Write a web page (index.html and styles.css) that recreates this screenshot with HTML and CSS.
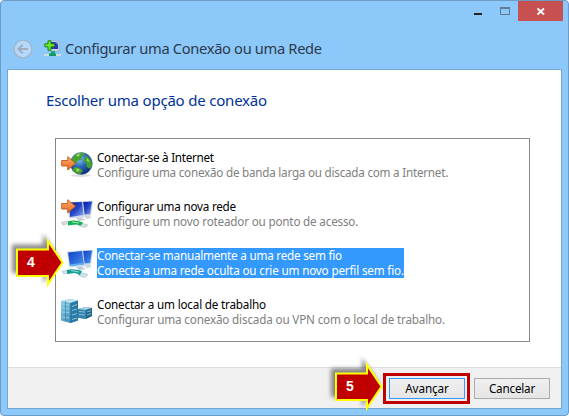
FILE: index.html
```html
<!DOCTYPE html>
<html lang="pt-BR">
<head>
<meta charset="utf-8">
<title>Configurar uma Conexão ou uma Rede</title>
<link rel="stylesheet" href="styles.css">
</head>
<body>
<svg class="defs" width="0" height="0">
  <defs>
    <linearGradient id="screen" x1="0" y1="0" x2="1" y2="1"><stop offset="0" stop-color="#1440bc"/><stop offset=".5" stop-color="#2a68dc"/><stop offset="1" stop-color="#4d9cf2"/></linearGradient>
    <linearGradient id="screenDark" x1="0" y1="0" x2="1" y2="1"><stop offset="0" stop-color="#0a1496"/><stop offset=".5" stop-color="#2446c8"/><stop offset="1" stop-color="#8eaef0"/></linearGradient>
    <linearGradient id="orange" x1="0" y1="0" x2="0" y2="1"><stop offset="0" stop-color="#ffb070"/><stop offset="1" stop-color="#e8621c"/></linearGradient>
    <radialGradient id="sea" cx=".4" cy=".3" r=".7"><stop offset="0" stop-color="#8cc4f0"/><stop offset=".5" stop-color="#2a68b8"/><stop offset="1" stop-color="#0c2c78"/></radialGradient>
    <linearGradient id="steel" x1="0" y1="0" x2="1" y2="1"><stop offset="0" stop-color="#8fd0ea"/><stop offset="1" stop-color="#2b7ca8"/></linearGradient>
    <symbol id="pcs" viewBox="0 0 32 32">
      <path d="M21 3.500 32 3 30 17.500 22 18z" fill="#c4d4e6"/>
      <path d="M22 4 31 3.500 29 16 22 16.500z" fill="url(#screen)"/>
      <path d="M6 4.500 22 3 24 19.500 8 20.500z" fill="#d3deea"/>
      <path d="M7 5.500 21 4 23 17.500 9 19z" fill="url(#screen)"/>
      <path d="M8.500 17.500 22.500 16 23 17.500 9 19z" fill="#58b4f4"/>
      <path d="M15 20 20 19.500 25 22 18 23z" fill="#b9c9d5"/>
      <path d="M24 18 29 17.500 30 20 25 21z" fill="#c9d6df"/>
    </symbol>
    <symbol id="pcsDark" viewBox="0 0 32 32">
      <path d="M21 3.500 32 3 30 17.500 22 18z" fill="#c9cfe0"/>
      <path d="M22 4 31 3.500 29 16 22 16.500z" fill="url(#screenDark)"/>
      <path d="M6 4.500 22 3 24 19.500 8 20.500z" fill="#d5dae8"/>
      <path d="M8 4.500 21 4 22.500 17 9 19z" fill="url(#screenDark)"/>
      <path d="M15 20 20 19.500 25 22 18 23z" fill="#c9ccd2"/>
      <path d="M24 18 29 17.500 30 20 25 21z" fill="#d0d4da"/>
    </symbol>
    <symbol id="goArrow" viewBox="0 0 32 32">
      <path d="M.7 7.500h6V3.700L14.500 10.200 6.700 17V13h-6z" fill="url(#orange)" stroke="#bd581e" stroke-width=".9"/>
    </symbol>
  </defs>
</svg>
<main class="window">
  <header class="titlebar">
    <div class="controls">
      <svg width="89" height="20" viewBox="473 1 89 20" shape-rendering="crispEdges">
        <path fill="#222" d="M473 13h8v2h-8z"/>
        <path fill="none" stroke="#607b94" d="M499.500 7.500h9v7h-9zM499 8.500h10"/>
        <path fill="#c75050" d="M517 1h45v20h-45z"/>
        <path shape-rendering="auto" stroke="#fff" stroke-width="1.800" d="m536.500 8.500 6.500 6m0-6-6.500 6"/>
      </svg>
    </div>
    <div class="caption">
      <svg class="back" width="20" height="20" viewBox="0 0 20 20" fill="none">
        <circle cx="10" cy="10" r="8.900" fill="#b4d9fa" stroke="#a2b5c8" stroke-width="1.400"/>
        <path d="M15 10H5.500M9.700 5.700 5.400 10l4.300 4.300" stroke="#a0adbc" stroke-width="2"/>
      </svg>
      <svg class="net" width="17" height="17" viewBox="0 0 17 17">
        <path d="M5 1h10v10H5z" fill="#d2dde8" stroke="#8ba0b8" stroke-width=".6"/>
        <path d="M7 2h7v7H7z" fill="#2638ae"/><path d="M11 2h3v3z" fill="#7f9bed"/>
        <path d="M7 11h4v3H7z" fill="#18a878"/>
        <path d="M0 14h5v2H0zm12 0h5v2h-5z" fill="#d3dce2"/><path d="M5 13.500h7v2.500H5z" fill="#0b9b62"/>
        <path d="M4 .8h3v3h3.500v3H7v3.500H4V6.800H.8v-3H4z" fill="#72e622" stroke="#158420"/>
      </svg>
      <span class="title">Configurar uma Conexão ou uma Rede</span>
    </div>
  </header>
  <section class="client">
    <div class="content">
      <h1><span>Escolher uma opção de conexão</span></h1>
      <ul class="options">
        <li>
          <svg class="icon" width="32" height="32" viewBox="0 0 32 32">
            <ellipse cx="20" cy="26.500" rx="10" ry="1.500" fill="#ddd"/>
            <circle cx="20.300" cy="14.500" r="11" fill="url(#sea)" stroke="#5b7f9c" stroke-width=".6"/>
            <path d="M13 6.500C17 3 22 3 24 5l-3 2-1 4-4 1-1 4-3-2-2-2zM25 7c4 1 6 6 6 9l-2 4-3-2-1-4-3-2zM14 18l5 1 3 3-3 3c-4-.5-7-2-8-4z" fill="#48a032"/>
            <path d="M15 6l5-2-3 4zM26 9l3 4-3-1zM15 19l4 2-3 2z" fill="#a6dc68"/>
            <use href="#goArrow" y="4"/>
          </svg>
          <div class="text"><b class="t1">Conectar-se à Internet</b><span class="d1">Configure uma conexão de banda larga ou discada com a Internet.</span></div>
        </li>
        <li>
          <svg class="icon" width="32" height="32" viewBox="0 0 32 32">
            <use href="#pcsDark"/>
            <path d="M0 24.500 7 23l2 2-7 2zM20 25l7 2-3 2.500-7-2z" fill="#d8dde0" stroke="#a7afb5" stroke-width=".5"/>
            <path d="M7 23.500c6-2 10-1 15 1l-2 3-5-1-8 1z" fill="#18ae55"/><path d="m11 24 7 1" stroke="#8df0a4"/>
            <use href="#goArrow" y="-2"/>
          </svg>
          <div class="text"><b class="t2">Configurar uma nova rede</b><span class="d2">Configure um novo roteador ou ponto de acesso.</span></div>
        </li>
        <li class="selected">
          <svg class="icon" width="32" height="32" viewBox="0 0 32 32">
            <use href="#pcs"/>
            <path d="M1 24.500 8 23l2 2-7 2zM20 25.500l7 2-3 3-7-2z" fill="#d3e3ea" stroke="#8eb7c8" stroke-width=".5"/>
            <path d="M6 23c6-1.500 10 0 15 1l-2 4-5-2-8 1z" fill="#159d94"/><path d="m10 23.500 8 1.500" stroke="#8ce0dc"/>
          </svg>
          <div class="text"><b class="t3">Conectar-se manualmente a uma rede sem fio</b><span class="d3">Conecte a uma rede oculta ou crie um novo perfil sem fio.</span></div>
        </li>
        <li>
          <svg class="icon" width="32" height="32" viewBox="0 0 32 32">
            <path d="m17 13 7-2 7 1v8l-7 3-7-1z" fill="#3484ac"/><path d="m17 13 7-2 7 1-6 2z" fill="#a7d4e5"/><path d="m25 14 6-2v8l-6 3z" fill="#24648c"/>
            <path d="m18 15.500 6 .5m-6 2.500 6 .5M26 16l4-1.500M26 19l4-1.500" stroke="#7cc0dc"/>
            <path d="m0 5 8-2 9 1.500v20L9 27 0 24.500z" fill="url(#steel)"/><path d="m0 5 8-2 9 1.500L9.500 7z" fill="#bce2ef"/><path d="m9.500 7 7.500-2.500v20L9.500 27z" fill="#2a79a4"/>
            <path d="m1 8 7 1m-7 3 7 1m-7 3 7 .5M1 21l7 1M11 10.500l5-2m-5 6 5-1.500m-5 6 5-1.500m-5 6 5-1.500" stroke="#9dd8ec" stroke-width=".8"/>
            <path d="M9.500 7v20M4.500 5v20" stroke="#2e7698" stroke-width=".6"/>
          </svg>
          <div class="text"><b class="t4">Conectar a um local de trabalho</b><span class="d4">Configurar uma conexão discada ou VPN com o local de trabalho.</span></div>
        </li>
      </ul>
    </div>
    <footer>
      <div class="highlight"><button class="primary"><span>Avançar</span></button></div>
      <button><span>Cancelar</span></button>
    </footer>
  </section>
</main>
<div class="callout four"><svg width="50" height="54" viewBox="0 0 50 54"><path d="M2 13.500h31V5l14.500 21.500L33 48v-8H2z"/></svg><span>4</span></div>
<div class="callout five"><svg width="50" height="54" viewBox="0 0 50 54"><path d="M2 13.500h31V5l14.500 21.500L33 48v-8H2z"/></svg><span>5</span></div>
</body>
</html>
```
FILE: styles.css
```css
* { box-sizing: border-box; }
body { margin: 0; background: #fff; font: 11.7px/15px "Noto Sans", "Open Sans", sans-serif; overflow: hidden; }
.defs { display: block; height: 0; }
.window { width: 569px; height: 416px; display: flex; flex-direction: column; background: #8dc8fb; border: 1px solid #6c9bc5; border-radius: 4px; padding: 0 6px 6px; }
.titlebar { height: 68px; flex: none; }
.controls { height: 20px; display: flex; justify-content: flex-end; margin-right: -1px; }
.controls svg { display: block; }
.caption { display: flex; align-items: center; height: 55px; padding-left: 6px; }
.net { margin-left: 11px; margin-top: -1px; }
.title { margin: -2px 0 0 4px; font-size: 14.7px; line-height: 20px; color: #2b3b4b; white-space: nowrap; letter-spacing: -.34px; }
.client { flex: 1; display: flex; flex-direction: column; border: 1px solid #75a7d3; background: #fff; }
.content { flex: 1; padding: 19px 31px 0 47px; }
h1 { margin: 0 0 0 -9px; font-size: 15px; line-height: 22px; height: 49px; font-weight: 400; color: #003399; white-space: nowrap; letter-spacing: -.2px; }
.options { list-style: none; margin: 0; padding: 7px 0 0 5px; height: 204px; border: 1px solid #828790; }
.options li { display: flex; height: 49px; gap: 4px; }
.icon { flex: none; margin-top: 3px; }
.text { display: flex; flex-direction: column; align-self: flex-start; margin-top: 4px; white-space: nowrap; color: #808080; }
.text b { font-weight: 400; color: #000; }
.text span, .text b { height: 15px; }
.text .t1 { letter-spacing: -.28px; }
.text .t2 { letter-spacing: -.23px; }
.text .t3 { letter-spacing: -.22px; }
.text .t4 { letter-spacing: -.19px; }
.text .d1 { letter-spacing: -.24px; }
.text .d2 { letter-spacing: -.19px; }
.text .d3 { letter-spacing: -.17px; }
.text .d4 { letter-spacing: -.17px; }
.selected .text { background: #3399ff; color: #fff; width: 307px; }
.selected .text b { color: #fff; }
footer { height: 41px; flex: none; display: flex; align-items: center; justify-content: flex-end; gap: 4px; padding-right: 11px; background: #f0f0f0; border-top: 1px solid #dfdfdf; }
button { width: 76px; height: 21px; padding: 0; border: 1px solid #acacac; background: linear-gradient(#f0f0f0, #e5e5e5); font: inherit; color: #000; letter-spacing: -.2px; }
.highlight { width: 87px; height: 31px; border: 3px solid #c00000; display: flex; align-items: center; padding-left: 3px; }
.highlight button { border-color: #3399ff; letter-spacing: -.1px; }
.callout { position: absolute; width: 50px; height: 54px; }
.callout svg { display: block; overflow: visible; filter: drop-shadow(-4px -4px 2px rgba(0,0,0,.45)); }
.callout path { fill: #c00000; stroke: #ffff00; stroke-width: 2; }
.callout span { position: absolute; left: 11px; top: 18px; width: 10px; text-align: center; color: #fff; font: bold 14px/16px "Liberation Sans", sans-serif; }
.four { left: 15px; top: 236px; }
.five { left: 334px; top: 360px; }
```
